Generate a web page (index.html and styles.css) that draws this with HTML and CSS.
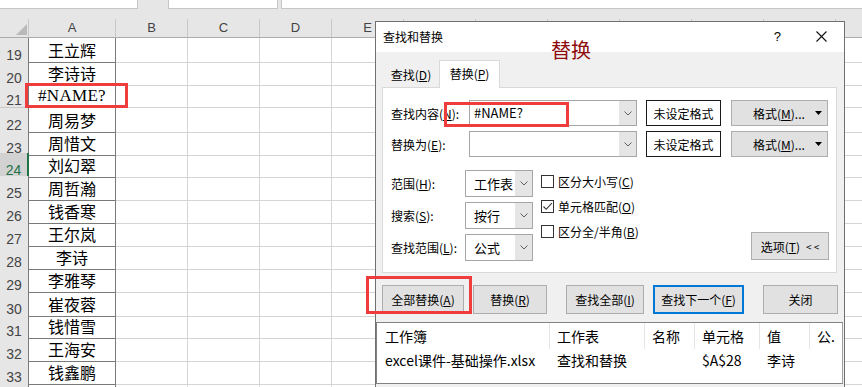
FILE: index.html
```html
<!DOCTYPE html>
<html lang="zh">
<head>
<meta charset="utf-8">
<title>查找和替换</title>
<link rel="stylesheet" href="styles.css">
</head>
<body>
<div class="app">
  <div class="topbar">
    <div class="box box-name"></div>
    <div class="box box-fx"></div>
    <div class="box box-formula"></div>
  </div>
  <div class="band"></div>
  <div class="sheet">
    <div class="row head">
      <div class="corner"><svg width="11" height="11" viewBox="0 0 11 11"><polygon points="11,0 11,11 0,11" fill="#b9b9b9"/></svg></div>
      <div class="ch cha">A</div>
      <div class="chrest">
        <div class="ch">B</div><div class="ch">C</div><div class="ch">D</div><div class="ch">E</div><div class="ch"></div><div class="ch"></div><div class="ch"></div><div class="ch"></div><div class="ch"></div><div class="ch"></div><div class="ch"></div>
      </div>
    </div>
    <div class="row"><div class="rh">19</div><div class="ca">王立辉</div><div class="rest"></div></div>
    <div class="row"><div class="rh">20</div><div class="ca">李诗诗</div><div class="rest"></div></div>
    <div class="row t24"><div class="rh">21</div><div class="ca err">#NAME?</div><div class="rest"></div></div>
    <div class="row"><div class="rh">22</div><div class="ca">周易梦</div><div class="rest"></div></div>
    <div class="row t22"><div class="rh">23</div><div class="ca">周惜文</div><div class="rest"></div></div>
    <div class="row"><div class="rh active">24</div><div class="ca">刘幻翠</div><div class="rest"></div></div>
    <div class="row"><div class="rh">25</div><div class="ca">周哲瀚</div><div class="rest"></div></div>
    <div class="row"><div class="rh">26</div><div class="ca">钱香寒</div><div class="rest"></div></div>
    <div class="row"><div class="rh">27</div><div class="ca">王尔岚</div><div class="rest"></div></div>
    <div class="row"><div class="rh">28</div><div class="ca">李诗</div><div class="rest"></div></div>
    <div class="row t24"><div class="rh">29</div><div class="ca">李雅琴</div><div class="rest"></div></div>
    <div class="row t22"><div class="rh">30</div><div class="ca">崔夜蓉</div><div class="rest"></div></div>
    <div class="row"><div class="rh">31</div><div class="ca">钱惜雪</div><div class="rest"></div></div>
    <div class="row"><div class="rh">32</div><div class="ca">王海安</div><div class="rest"></div></div>
    <div class="row"><div class="rh">33</div><div class="ca">钱鑫鹏</div><div class="rest"></div></div>
    <div class="row"><div class="rh"></div><div class="ca"></div><div class="rest"></div></div>
  </div>

  <div class="dialog">
    <div class="titlebar">
      <span class="title">查找和替换</span>
      <span class="help">?</span>
      <svg class="close" width="11" height="11" viewBox="0 0 11 11"><path d="M0.5 0.5L10.5 10.5M10.5 0.5L0.5 10.5" stroke="#111" stroke-width="1.1" fill="none"/></svg>
    </div>
    <div class="dbody">
      <div class="tabs">
        <div class="tab">查找(<u>D</u>)</div>
        <div class="tab active">替换(<u>P</u>)</div>
      </div>
      <div class="panel">
        <div class="frow">
          <span class="flabel">查找内容(<u>N</u>):</span>
          <div class="combo wide"><span class="val">#NAME?</span><span class="drop"><svg width="8" height="5" viewBox="0 0 8 5"><path d="M0.5 0.5L4 4L7.5 0.5" fill="none" stroke="#606060"/></svg></span></div>
          <div class="fmtbox">未设定格式</div>
          <div class="btn fmtbtn"><span>格式(<u>M</u>)...</span><svg width="7" height="4" viewBox="0 0 7 4"><path d="M0 0H7L3.5 4Z" fill="#000"/></svg></div>
        </div>
        <div class="frow second">
          <span class="flabel">替换为(<u>E</u>):</span>
          <div class="combo wide"><span class="val"></span><span class="drop"><svg width="8" height="5" viewBox="0 0 8 5"><path d="M0.5 0.5L4 4L7.5 0.5" fill="none" stroke="#606060"/></svg></span></div>
          <div class="fmtbox">未设定格式</div>
          <div class="btn fmtbtn"><span>格式(<u>M</u>)...</span><svg width="7" height="4" viewBox="0 0 7 4"><path d="M0 0H7L3.5 4Z" fill="#000"/></svg></div>
        </div>
        <div class="opts">
          <div class="optcol">
            <div class="orow"><span class="olabel">范围(<u>H</u>):</span><div class="combo small"><span class="val">工作表</span><span class="drop"><svg width="8" height="5" viewBox="0 0 8 5"><path d="M0.5 0.5L4 4L7.5 0.5" fill="none" stroke="#606060"/></svg></span></div></div>
            <div class="orow"><span class="olabel">搜索(<u>S</u>):</span><div class="combo small"><span class="val">按行</span><span class="drop"><svg width="8" height="5" viewBox="0 0 8 5"><path d="M0.5 0.5L4 4L7.5 0.5" fill="none" stroke="#606060"/></svg></span></div></div>
            <div class="orow"><span class="olabel">查找范围(<u>L</u>):</span><div class="combo small"><span class="val">公式</span><span class="drop"><svg width="8" height="5" viewBox="0 0 8 5"><path d="M0.5 0.5L4 4L7.5 0.5" fill="none" stroke="#606060"/></svg></span></div></div>
          </div>
          <div class="checks">
            <div class="check"><span class="cb"></span><span>区分大小写(<u>C</u>)</span></div>
            <div class="check"><span class="cb"><svg width="11" height="11" viewBox="0 0 11 11"><path d="M1.5 5.5L4.2 8.3L9.8 2.2" fill="none" stroke="#333" stroke-width="1.1"/></svg></span><span>单元格匹配(<u>O</u>)</span></div>
            <div class="check"><span class="cb"></span><span>区分全/半角(<u>B</u>)</span></div>
          </div>
          <div class="btn options">选项(<u>T</u>)<span class="chev">&lt; &lt;</span></div>
        </div>
      </div>
      <div class="actions">
        <div class="btn a1">全部替换(<u>A</u>)</div>
        <div class="btn a2">替换(<u>R</u>)</div>
        <div class="btn a3">查找全部(<u>I</u>)</div>
        <div class="btn a4 default">查找下一个(<u>F</u>)</div>
        <div class="btn a5">关闭</div>
      </div>
      <div class="results">
        <div class="rrow rhead">
          <div class="rc first">工作簿</div>
          <div class="rc">工作表</div>
          <div class="rc">名称</div>
          <div class="rc">单元格</div>
          <div class="rc">值</div>
          <div class="rc">公.</div>
        </div>
        <div class="rrow">
          <div class="rc first">excel课件-基础操作.xlsx</div>
          <div class="rc">查找和替换</div>
          <div class="rc"></div>
          <div class="rc">$A$28</div>
          <div class="rc">李诗</div>
          <div class="rc"></div>
        </div>
      </div>
    </div>
  </div>

  <div class="note">替换</div>
  <div class="mark mark-cell"></div>
  <div class="mark mark-find"></div>
  <div class="mark mark-all"></div>
</div>
</body>
</html>
```

FILE: styles.css
```css
* { box-sizing: border-box; }
html, body { margin: 0; padding: 0; }
body {
  width: 862px;
  height: 387px;
  overflow: hidden;
  background: #fff;
  font-family: "Noto Sans CJK SC", "Liberation Sans", sans-serif;
}
.app { position: relative; width: 862px; height: 387px; overflow: hidden; }

/* top formula bar */
.topbar { display: flex; height: 9px; background: #e6e6e6; }
.box { background: #fff; border-bottom: 1px solid #c6c6c6; border-right: 1px solid #c6c6c6; }
.box-name { width: 138px; }
.box-fx { width: 110px; margin-left: 30px; border-left: 1px solid #c6c6c6; }
.box-formula { flex: 1; margin-left: 3px; border-left: 1px solid #c6c6c6; border-right: none; }
.band { height: 10px; background: #e6e6e6; }

/* sheet */
.row { display: grid; grid-template-columns: 29px 87px 1fr; height: 23px; }
.row.t24 { height: 24px; }
.row.t22 { height: 22px; }
.row.head { height: 19px; }
.corner {
  background: #e6e6e6;
  border-right: 1px solid #c8c8c8;
  border-bottom: 1px solid #ababab;
  display: flex; align-items: flex-end; justify-content: flex-end;
  padding: 0 1px 2px 0;
}
.corner svg { display: block; }
.ch {
  background: #e6e6e6;
  border-right: 1px solid #c8c8c8;
  border-bottom: 1px solid #ababab;
  font: 13px/18px "Liberation Sans", sans-serif;
  color: #444;
  text-align: center;
}
.chrest { display: flex; overflow: hidden; }
.chrest .ch { flex: 0 0 72px; }
.rh {
  background: #e6e6e6;
  border-right: 1px solid #7a7a7a;
  border-bottom: 1px solid #c8c8c8;
  font: 14px/14px "Liberation Sans", sans-serif;
  color: #444;
  display: flex; align-items: flex-end; justify-content: center;
}
.rh.active { background: #d2d2d2; color: #217346; border-right: 2px solid #217346; }
.ca {
  border-right: 1px solid #7a7a7a;
  border-bottom: 1px solid #7a7a7a;
  font-size: 16px;
  color: #000;
  display: flex; align-items: center; justify-content: center;
  white-space: nowrap;
}
.ca.err { font-family: "Liberation Serif", serif; font-size: 17px; letter-spacing: 0.3px; }
.rest {
  border-bottom: 1px solid #d4d4d4;
  background: repeating-linear-gradient(to right, transparent 0 71px, #d4d4d4 71px 72px);
}

/* dialog window */
.dialog {
  position: absolute;
  left: 375px;
  top: 21px;
  width: 470px;
  height: 380px;
  border: 1px solid #707070;
  background: #f0f0f0;
  font-size: 12px;
  color: #000;
}
.titlebar {
  height: 30px;
  background: #fff;
  display: flex;
  align-items: center;
  padding-left: 7px;
  padding-bottom: 1px;
}
.title { font-size: 12px; }
.help { margin-left: auto; font: 13px "Liberation Sans", sans-serif; }
.close { margin-left: 35px; margin-right: 17px; display: block; }
.dbody { padding-top: 8px; }
.tabs { display: flex; align-items: flex-end; height: 27px; margin-left: 7px; }
.tab {
  width: 56px;
  height: 25px;
  display: flex; align-items: center; justify-content: center;
}
.tab.active {
  width: 61px;
  height: 28px;
  margin-bottom: -1px;
  background: #fff;
  border: 1px solid #d9d9d9;
  border-bottom: none;
  position: relative;
  z-index: 1;
  padding-bottom: 2px;
}
.panel {
  margin-left: 6px;
  width: 455px;
  height: 186px;
  border: 1px solid #d9d9d9;
  background: #fff;
  padding: 12px 7px 0 8px;
}
.frow { display: flex; align-items: center; height: 26px; }
.frow.second { margin-top: 5px; }
.flabel { width: 78px; white-space: nowrap; }
.combo {
  display: flex;
  border: 1px solid #a6a6a6;
  background: #fff;
  height: 26px;
}
.combo .val { flex: 1; padding-left: 4px; font-size: 13px; line-height: 24px; white-space: nowrap; }
.combo .drop {
  width: 17px;
  background: #e5e5e5;
  display: flex; align-items: center; justify-content: center;
}
.combo .drop svg { display: block; }
.combo.wide { width: 168px; }
.combo.small { width: 68px; height: 27px; }
.combo.small .val { line-height: 25px; padding-left: 8px; font-size: 13px; }
.fmtbox {
  margin-left: 9px;
  width: 75px;
  height: 26px;
  border: 1px solid #1a1a1a;
  display: flex; align-items: center; justify-content: center;
  white-space: nowrap;
}
.btn {
  background: #e1e1e1;
  border: 1px solid #adadad;
  display: flex; align-items: center; justify-content: center;
  white-space: nowrap;
}
.fmtbtn {
  margin-left: 10px;
  width: 97px;
  height: 26px;
  justify-content: flex-start;
  padding: 0 5px 0 21px;
}
.fmtbtn svg { margin-left: auto; display: block; }
.opts { display: flex; align-items: flex-start; margin-top: 13px; }
.optcol { display: flex; flex-direction: column; gap: 5px; }
.orow { display: flex; align-items: center; }
.olabel { width: 74px; white-space: nowrap; }
.checks { margin-left: 8px; padding-top: 1px; display: flex; flex-direction: column; gap: 5px; }
.check { display: flex; align-items: center; height: 20px; white-space: nowrap; }
.cb {
  width: 13px; height: 13px;
  border: 1px solid #333;
  background: #fff;
  margin-right: 4px;
  display: flex; align-items: center; justify-content: center;
}
.cb svg { display: block; }
.options {
  margin-left: auto;
  align-self: flex-end;
  width: 78px;
  height: 28px;
  margin-bottom: 1px;
}
.chev { margin-left: 6px; font-size: 10px; }
.actions { display: flex; margin-top: 12px; padding-left: 6px; height: 29px; }
.actions .btn { height: 29px; }
.a1 { width: 82px; }
.a2 { width: 74px; margin-left: 9px; }
.a3 { width: 78px; margin-left: 19px; }
.a4 { width: 91px; margin-left: 9px; }
.a5 { width: 75px; margin-left: 19px; }
.btn.default { border: 2px solid #0078d7; }
.results {
  margin-top: 8px;
  width: 467px;
  height: 62px;
  border: 1px solid #828282;
  border-right-color: #a0a0a0;
  background: #fff;
  font-size: 14px;
}
.rrow { display: grid; grid-template-columns: 173px 95px 50px 65px 50px 1fr; }
.rhead { height: 26px; }
.rhead .rc { border-right: 1px solid #e5e5e5; line-height: 26px; }
.rhead .rc:last-child { border-right: none; }
.rrow + .rrow .rc { height: 23px; line-height: 23px; }
.rc { padding-left: 7px; white-space: nowrap; overflow: hidden; }
.rc.first { padding-left: 8px; }

/* annotations */
.note {
  position: absolute;
  left: 551px;
  top: 40px;
  font-size: 20px;
  line-height: 20px;
  color: #8e0c0c;
}
.mark {
  position: absolute;
  border: 3px solid #ef3d3d;
}
.mark-cell { left: 25px; top: 83px; width: 103px; height: 25px; }
.mark-find { left: 444px; top: 102px; width: 125px; height: 25px; }
.mark-all { left: 366px; top: 276px; width: 106px; height: 38px; }
```
